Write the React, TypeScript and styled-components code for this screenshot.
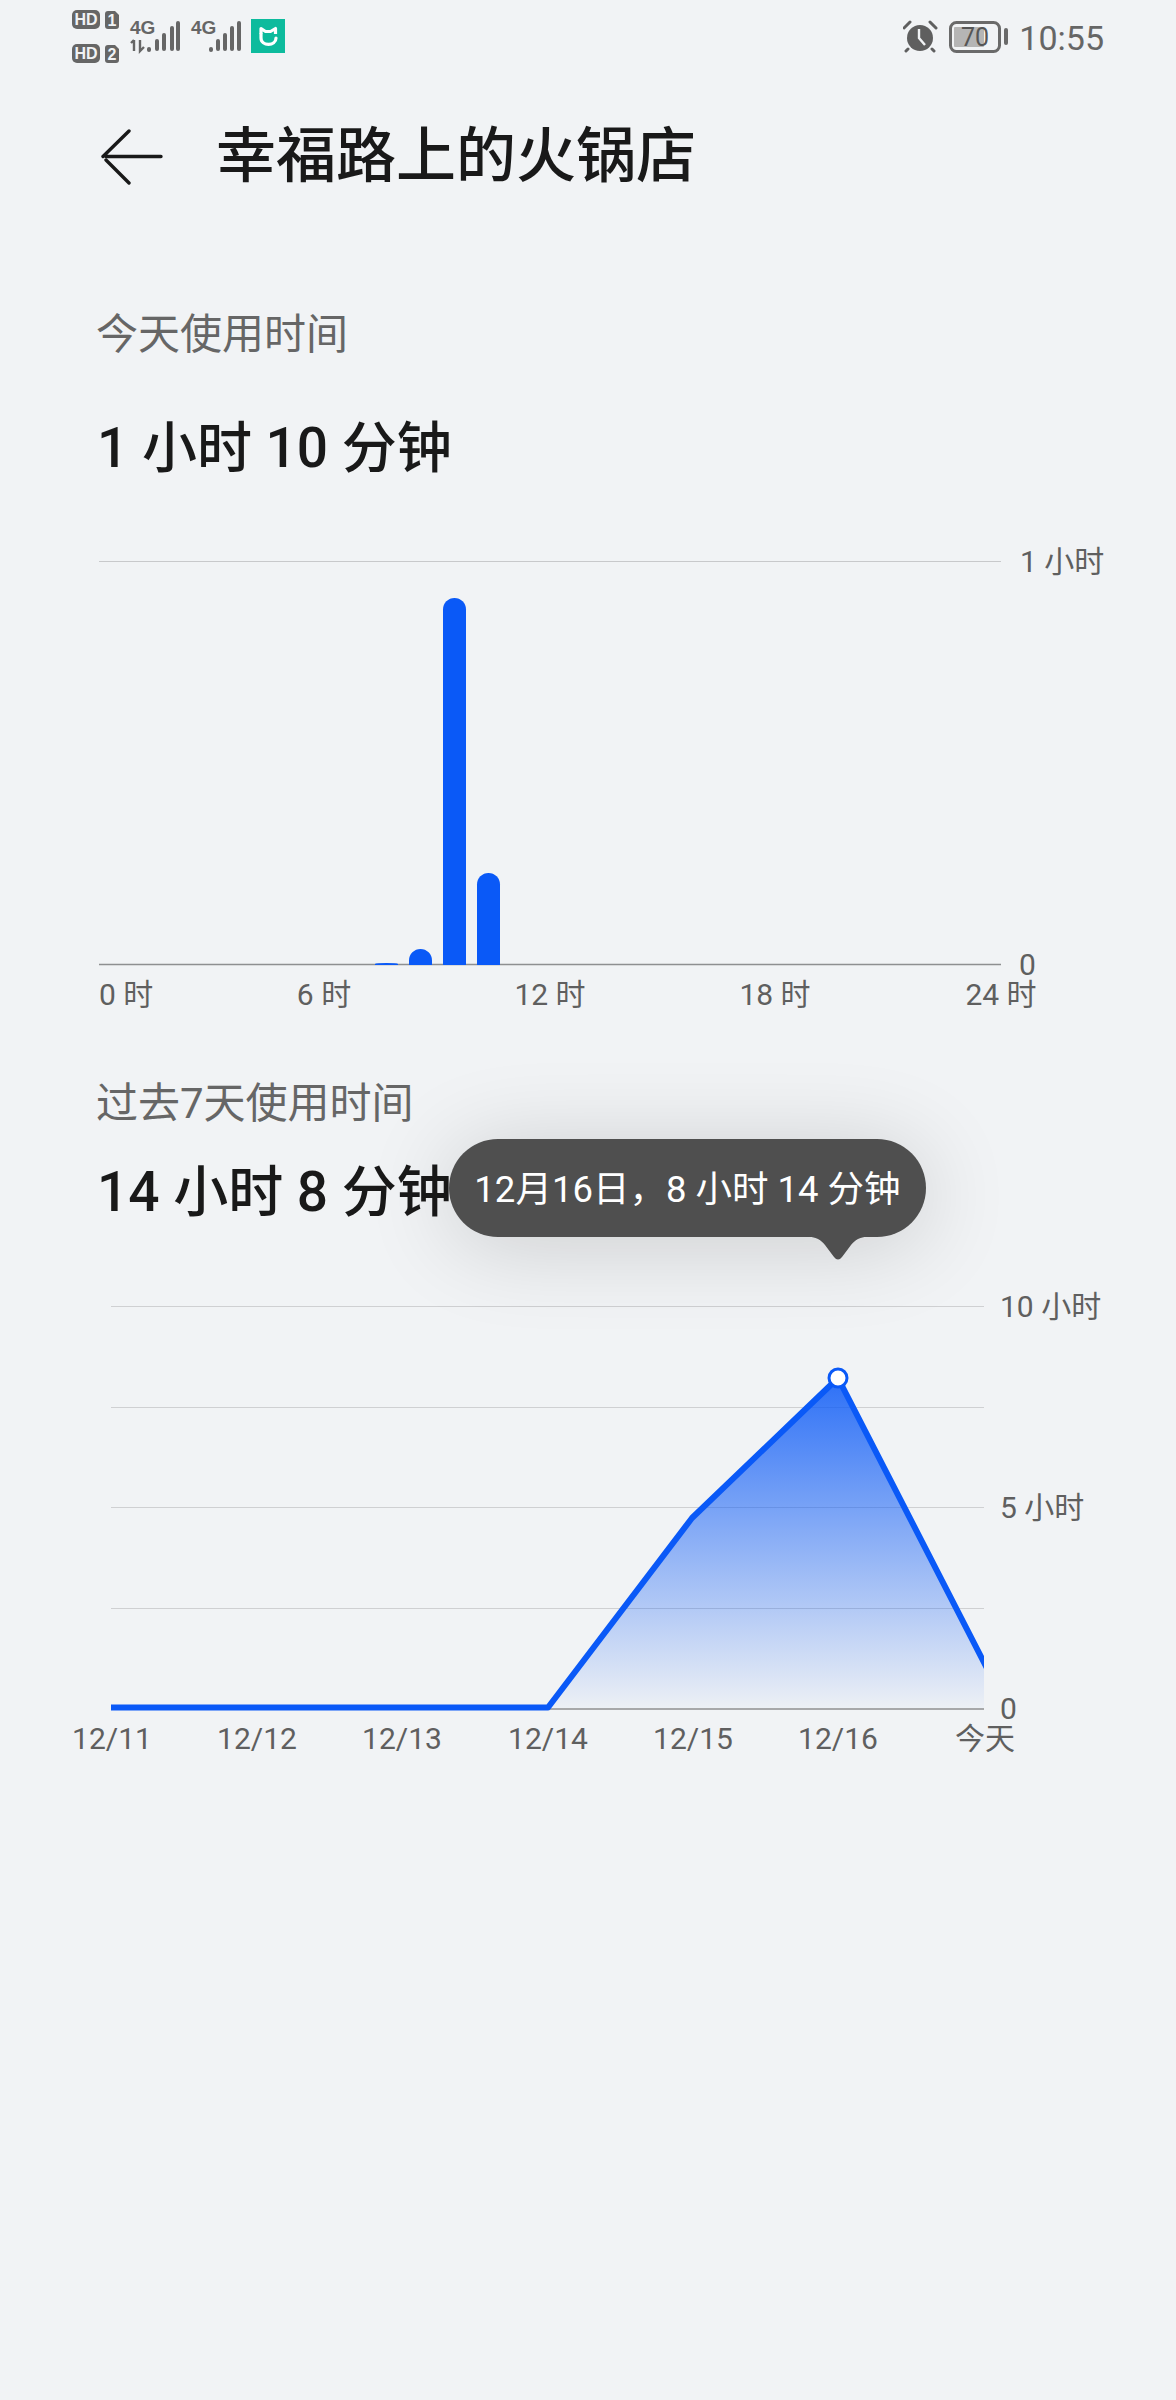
import React from "react";
import styled, { createGlobalStyle } from "styled-components";

const FONT = `Roboto, "Noto Sans CJK SC", "Noto Sans", sans-serif`;
const BLUE = "#0a59f7";

const Global = createGlobalStyle`
  html, body { margin: 0; padding: 0; background: #f1f3f5; }
  body { font-family: ${FONT}; }
`;

const Page = styled.div`
  width: 1176px;
  height: 2400px;
  background: #f1f3f5;
  overflow: hidden;
`;

const StatusBar = styled.div`
  height: 74px;
  padding: 0 72px;
  display: flex;
  align-items: center;
  justify-content: space-between;
`;

const StatusIcons = styled.svg`
  display: block;
`;

const StatusRight = styled.div`
  display: flex;
  align-items: center;
  gap: 10px;
`;

const Clock = styled.span`
  font-size: 34px;
  line-height: 74px;
  padding-top: 2px;
  color: #666;
`;

const TileText = styled.text<{ $size?: number }>`
  font-family: "Liberation Sans", sans-serif;
  font-weight: 700;
  font-size: ${(p) => p.$size ?? 16}px;
  fill: #f1f3f5;
`;

const NetText = styled.text`
  font-family: "Liberation Sans Narrow", "Liberation Sans", sans-serif;
  font-weight: 700;
  font-size: 19px;
  fill: #666;
`;

const BatteryText = styled.text`
  font-family: ${FONT};
  font-size: 25px;
  fill: #555;
`;

const Header = styled.header`
  box-sizing: border-box;
  height: 162px;
  padding: 3px 0 0 100px;
  display: flex;
  align-items: center;
  gap: 53px;
`;

const Title = styled.h1`
  margin: 0;
  font-size: 60px;
  line-height: 80px;
  font-weight: 500;
  color: #191919;
`;

const Section = styled.section<{ $top: number }>`
  margin-top: ${(p) => p.$top}px;
`;

const Caption = styled.div`
  padding-left: 96px;
  font-size: 42px;
  line-height: 60px;
  color: #666;
`;

const Total = styled.div<{ $gap: number }>`
  margin-top: ${(p) => p.$gap}px;
  padding-left: 97px;
  font-size: 55px;
  line-height: 70px;
  font-weight: 500;
  color: #191919;
  white-space: pre;
`;

const ChartWrap = styled.div<{ $gap: number; $height: number }>`
  position: relative;
  margin-top: ${(p) => p.$gap}px;
  height: ${(p) => p.$height}px;
`;

const ChartSvg = styled.svg`
  display: block;
`;

const AxisText = styled.text`
  font-family: ${FONT};
  font-size: 30px;
  fill: #5f5f5f;
`;

const Tooltip = styled.div`
  position: absolute;
  left: 449px;
  top: -140px;
  width: 477px;
  height: 98px;
  border-radius: 49px;
  background: #4f4f4f;
  color: #fff;
  font-size: 36.5px;
  line-height: 101px;
  text-align: center;
  white-space: pre;
  box-shadow: 0 8px 90px rgba(0, 0, 0, 0.16);
`;

const TooltipTail = styled.svg`
  position: absolute;
  left: 356px;
  top: 97px;
  display: block;
`;

const LeftStatus = () => {
  const bars = (xs: number[]) => {
    const tops = [48, 39, 33, 26, 21];
    return xs.map((x, i) => (
      <line key={x} x1={x} x2={x} y1={tops[i] + 2} y2={49} stroke="#666" strokeWidth={4} strokeLinecap="round" />
    ));
  };
  return (
    <StatusIcons width={220} height={74} viewBox="72 0 220 74">
      <rect x={72} y={10} width={28} height={19} rx={5} fill="#666" />
      <TileText x={86} y={25} textAnchor="middle">HD</TileText>
      <path d="M105 14a3 3 0 0 1 3-3h7l4 4v11a3 3 0 0 1-3 3h-8a3 3 0 0 1-3-3z" fill="#666" />
      <TileText x={112} y={26} textAnchor="middle">1</TileText>
      <rect x={72} y={44} width={28} height={19} rx={5} fill="#666" />
      <TileText x={86} y={59} textAnchor="middle">HD</TileText>
      <path d="M105 48a3 3 0 0 1 3-3h7l4 4v11a3 3 0 0 1-3 3h-8a3 3 0 0 1-3-3z" fill="#666" />
      <TileText x={112} y={60} textAnchor="middle">2</TileText>
      <NetText x={130} y={34}>4G</NetText>
      <path d="M134 40v11M131 43l3-3M140 40v11l4-4" stroke="#666" strokeWidth={2.4} fill="none" />
      {bars([149, 157, 164, 172, 178])}
      <NetText x={191} y={34}>4G</NetText>
      {bars([211, 218, 225, 232, 239])}
      <rect x={251} y={19} width={34} height={34} fill="#0dbb9d" />
      <path d="M261 34V28.5l4.5 3h5l5-3V34" stroke="#fff" strokeWidth={3.2} fill="none" strokeLinejoin="round" />
      <path d="M261 34v4c0 8.5 15 8.5 15 0" stroke="#fff" strokeWidth={3.2} fill="none" strokeLinecap="round" />
    </StatusIcons>
  );
};

const RightIcons = () => (
  <StatusIcons width={106} height={74} viewBox="903 0 106 74">
    <circle cx={920} cy={38} r={13} fill="#5f5f5f" />
    <path d="M919 29v9l6 7" stroke="#f1f3f5" strokeWidth={2.4} fill="none" />
    <path d="M904 28l6-6M936 28l-6-6M908 49l-2 2M932 49l2 2" stroke="#5f5f5f" strokeWidth={3} strokeLinecap="round" />
    <rect x={950.5} y={22.5} width={49} height={29} rx={6} fill="none" stroke="#6a6a6a" strokeWidth={3} />
    <rect x={954} y={27} width={30} height={20} rx={1} fill="#b5b5b5" />
    <BatteryText x={975} y={37} textAnchor="middle" dominantBaseline="central">70</BatteryText>
    <rect x={1004} y={28} width={4} height={17} rx={2} fill="#6a6a6a" />
  </StatusIcons>
);

const hourLabels: [string, number, "start" | "middle"][] = [
  ["0 时", 99, "start"],
  ["6 时", 324, "middle"],
  ["12 时", 550, "middle"],
  ["18 时", 775, "middle"],
  ["24 时", 1001, "middle"],
];

const hourBars = [
  { x: 375, top: 963 },
  { x: 409, top: 949 },
  { x: 443, top: 598 },
  { x: 477, top: 873 },
];

const TodayChart = () => (
  <ChartSvg width={1176} height={480} viewBox="0 540 1176 480">
    <line x1={99} x2={1001} y1={561.5} y2={561.5} stroke="#c8c9cb" strokeWidth={1.2} />
    <line x1={99} x2={1001} y1={964.5} y2={964.5} stroke="#8e8f91" strokeWidth={1.5} />
    {hourBars.map((b) => {
      const r = Math.min(11.5, 964 - b.top);
      return (
        <path
          key={b.x}
          d={`M${b.x} 965V${b.top + r}A11.5 ${r} 0 0 1 ${b.x + 23} ${b.top + r}V965z`}
          fill={BLUE}
        />
      );
    })}
    <AxisText x={1020} y={561} dominantBaseline="central">1 小时</AxisText>
    <AxisText x={1019} y={964} dominantBaseline="central">0</AxisText>
    {hourLabels.map(([t, x, a]) => (
      <AxisText key={t} x={x} y={994} textAnchor={a} dominantBaseline="central">{t}</AxisText>
    ))}
  </ChartSvg>
);

const dayLabels: [string, number][] = [
  ["12/11", 112],
  ["12/12", 257],
  ["12/13", 402],
  ["12/14", 548],
  ["12/15", 693],
  ["12/16", 838],
  ["今天", 985],
];

const WeekChart = () => (
  <ChartSvg width={1176} height={490} viewBox="0 1279 1176 490">
    <defs>
      <linearGradient id="area" gradientUnits="userSpaceOnUse" x1={0} x2={0} y1={1378} y2={1708}>
        <stop offset="0" stopColor={BLUE} stopOpacity={0.85} />
        <stop offset="1" stopColor={BLUE} stopOpacity={0.02} />
      </linearGradient>
      <clipPath id="plot">
        <rect x={111} y={1280} width={873} height={440} />
      </clipPath>
    </defs>
    {[1306.5, 1407.5, 1507.5, 1608.5].map((y) => (
      <line key={y} x1={111} x2={984} y1={y} y2={y} stroke="#cfd0d2" strokeWidth={1.2} />
    ))}
    <line x1={111} x2={984} y1={1709} y2={1709} stroke="#8e8f91" strokeWidth={1.5} />
    <path d="M548 1708L692 1518L838 1378L984 1662V1708z" fill="url(#area)" />
    <path
      d="M111 1707.5H548L692 1518L838 1378L994 1682"
      fill="none"
      stroke={BLUE}
      strokeWidth={6}
      strokeLinejoin="round"
      clipPath="url(#plot)"
    />
    <circle cx={838} cy={1378} r={9} fill="#fff" stroke={BLUE} strokeWidth={3} />
    <AxisText x={1000} y={1306} dominantBaseline="central">10 小时</AxisText>
    <AxisText x={1000} y={1507} dominantBaseline="central">5 小时</AxisText>
    <AxisText x={1000} y={1708} dominantBaseline="central">0</AxisText>
    {dayLabels.map(([t, x]) => (
      <AxisText key={t} x={x} y={1738} textAnchor="middle" dominantBaseline="central">{t}</AxisText>
    ))}
  </ChartSvg>
);

export default function App() {
  return (
    <>
      <Global />
      <Page>
        <StatusBar>
          <LeftStatus />
          <StatusRight>
            <RightIcons />
            <Clock>10:55</Clock>
          </StatusRight>
        </StatusBar>
        <Header>
          <svg width={63} height={56} viewBox="0 0 63 56" fill="none">
            <path d="M29 2L3 27.5M6 31L29 54M6 27.5H61" stroke="#191919" strokeWidth={3.4} strokeLinecap="round" />
          </svg>
          <Title>幸福路上的火锅店</Title>
        </Header>
        <Section $top={69}>
          <Caption>今天使用时间</Caption>
          <Total $gap={48}>1 小时 10 分钟</Total>
          <ChartWrap $gap={57} $height={480}>
            <TodayChart />
          </ChartWrap>
        </Section>
        <Section $top={54}>
          <Caption>过去7天使用时间</Caption>
          <Total $gap={23}>14 小时 8 分钟</Total>
          <ChartWrap $gap={52} $height={490}>
            <WeekChart />
            <Tooltip>
              12月16日，8 小时 14 分钟
              <TooltipTail width={66} height={28} viewBox="0 0 66 28">
                <path d="M0 0H66C54 1 50 4 46 9L37 21Q33 26 29 21L20 9C16 4 12 1 0 0z" fill="#4f4f4f" />
              </TooltipTail>
            </Tooltip>
          </ChartWrap>
        </Section>
      </Page>
    </>
  );
}
